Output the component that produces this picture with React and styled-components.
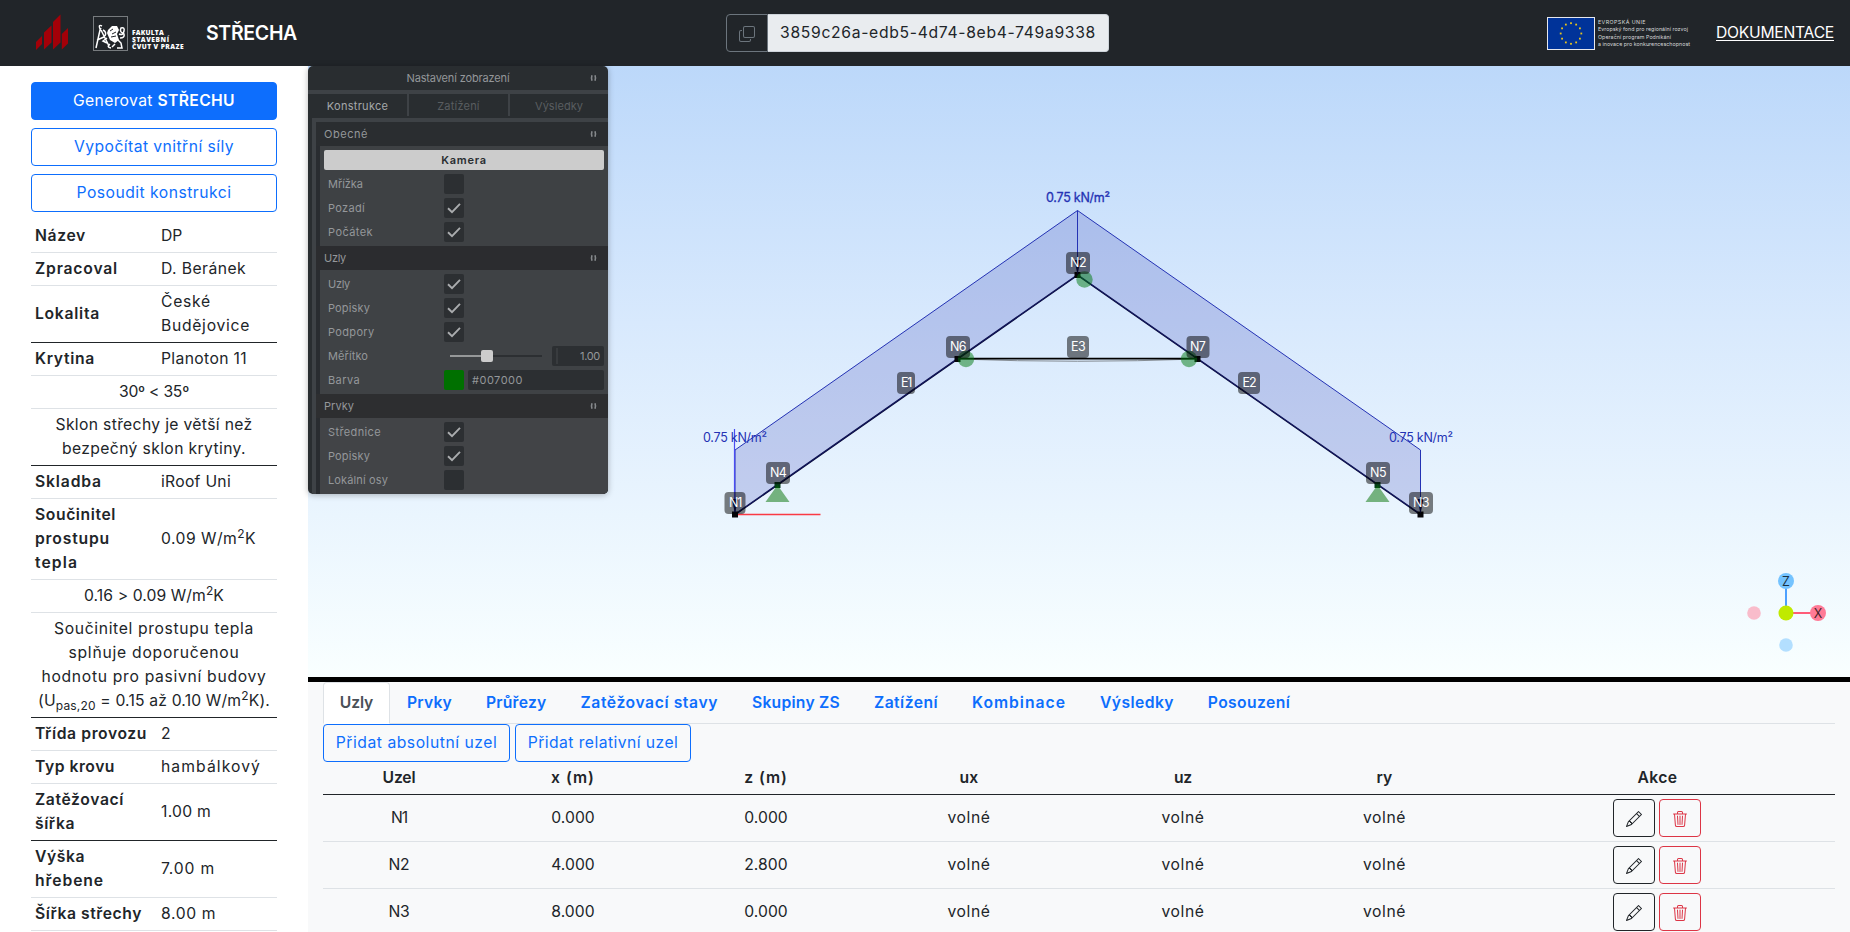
import React, { useLayoutEffect, useRef, useState } from "react";
import styled, { createGlobalStyle, css } from "styled-components";
import { BsCopy, BsPencil, BsTrash3 } from "react-icons/bs";

const GlobalStyle = createGlobalStyle`
  *, *::before, *::after { box-sizing: border-box; }
  body {
    margin: 0;
    overflow: hidden;
    font-family: Inter, "Noto Sans", sans-serif;
    font-size: 15.7px;
    line-height: 24px;
    color: #212529;
    background: #fff;
  }
  table { border-collapse: separate; border-spacing: 0; table-layout: fixed; }
`;

const FitText = styled.span`
  display: inline-block;
  white-space: nowrap;
`;

function Fit({ w, children }) {
  const ref = useRef(null);
  const [tracking, setTracking] = useState(0);
  useLayoutEffect(() => {
    const el = ref.current;
    const chars = el.textContent.length;
    const natural = el.getBoundingClientRect().width;
    setTracking((w - natural) / chars);
  }, [w]);
  return (
    <FitText ref={ref} style={{ letterSpacing: `${tracking}px` }}>
      {children}
    </FitText>
  );
}

/* ---------- page frame ---------- */

const Page = styled.div`
  display: flex;
  flex-direction: column;
  width: 1850px;
  height: 932px;
  overflow: hidden;
`;

const Body = styled.div`
  display: flex;
  flex: 1;
  min-height: 0;
`;

const Main = styled.main`
  display: flex;
  flex-direction: column;
  flex: 1;
  min-width: 0;
`;

/* ---------- header ---------- */

const Header = styled.header`
  display: flex;
  align-items: center;
  justify-content: space-between;
  height: 66px;
  padding: 0 16px 0 35px;
  background: #212529;
  color: #fff;
`;

const Brand = styled.div`
  display: flex;
  align-items: center;
  width: 691px;
`;

const FacultyLogo = styled.div`
  display: flex;
  gap: 4px;
  margin-left: 24px;
  width: 113px;
`;

const FacultyName = styled.div`
  padding-top: 13px;
  font: 900 6.6px/7.2px "Open Sans", sans-serif;
`;

const Title = styled.div`
  font-size: 19.5px;
  font-weight: 600;
`;

const IdGroup = styled.div`
  display: flex;
  height: 38px;
  width: 383px;
  margin-right: auto;
`;

const CopyButton = styled.button`
  display: flex;
  align-items: center;
  justify-content: center;
  width: 42px;
  padding: 1px 0 0;
  color: #6c757d;
  background: transparent;
  border: 1px solid #6c757d;
  border-radius: 4px 0 0 4px;
`;

const IdField = styled.div`
  flex: 1;
  padding: 6px 12px;
  color: #212529;
  background: #e9ecef;
  border: 1px solid #ced4da;
  border-left: 0;
  border-radius: 0 4px 4px 0;
  line-height: 24px;
`;

const Funding = styled.div`
  display: flex;
  gap: 3px;
  width: 169px;
`;

const FundingText = styled.div`
  padding-top: 2px;
  font: 5.3px/7.6px Inter, sans-serif;
  color: #d8d9da;
`;

const DocLink = styled.a`
  color: #fff;
  line-height: 20px;
  ${FitText} {
    text-decoration: underline;
    text-decoration-thickness: 1px;
    text-underline-offset: 2px;
  }
`;

/* ---------- sidebar ---------- */

const Sidebar = styled.aside`
  width: 308px;
  padding: 16px 31px 0;
  overflow: hidden;
`;

const ButtonStack = styled.div`
  display: flex;
  flex-direction: column;
  gap: 8px;
  margin-bottom: 8px;
`;

const Button = styled.button`
  height: 38px;
  padding: 0;
  font: inherit;
  text-align: center;
  border: 1px solid #0d6efd;
  border-radius: 4px;
  color: ${(p) => (p.$primary ? "#fff" : "#0d6efd")};
  background: ${(p) => (p.$primary ? "#0d6efd" : "transparent")};
  width: ${(p) => (p.$width ? `${p.$width}px` : "auto")};
  b { font-weight: 600; }
`;

const InfoTable = styled.table`
  width: 246px;
`;

const InfoRow = styled.tr`
  > * { border-bottom: 1px solid ${(p) => (p.$strong ? "#212529" : "#dee2e6")}; }
`;

const cell = css`
  padding: 4px;
  vertical-align: middle;
  sup, sub { font-size: 12px; line-height: 0; position: relative; vertical-align: baseline; }
  sup { top: -6px; }
  sub { bottom: -4px; }
`;

const InfoHead = styled.th`
  ${cell}
  text-align: left;
  font-weight: 600;
`;

const InfoCell = styled.td`
  ${cell}
  text-align: ${(p) => (p.$note ? "center" : "left")};
  padding: ${(p) => (p.$note ? "4px 0" : "4px")};
`;

const INFO = [
  { head: [["Název", 51]], value: [["DP", 21]] },
  { head: [["Zpracoval", 83]], value: [["D. Beránek", 85]] },
  { head: [["Lokalita", 65]], value: [["České", 50], ["Budějovice", 89]], strong: true },
  { head: [["Krytina", 60]], value: [["Planoton 11", 86]] },
  { note: [["30º < 35º", 70]] },
  { note: [["Sklon střechy je větší než", 197], ["bezpečný sklon krytiny.", 184]], strong: true },
  { head: [["Skladba", 67]], value: [["iRoof Uni", 70]] },
  {
    head: [["Součinitel", 81], ["prostupu", 75], ["tepla", 43]],
    value: [[<>0.09 W/m<sup>2</sup>K</>, 95]],
  },
  { note: [[<>0.16 &gt; 0.09 W/m<sup>2</sup>K</>, 140]] },
  {
    note: [
      ["Součinitel prostupu tepla", 200],
      ["splňuje doporučenou", 171],
      ["hodnotu pro pasivní budovy", 225],
      [<>(U<sub>pas,20</sub> = 0.15 až 0.10 W/m<sup>2</sup>K).</>, 232],
    ],
    strong: true,
  },
  { head: [["Třída provozu", 112]], value: [["2", 10]] },
  { head: [["Typ krovu", 80]], value: [["hambálkový", 100]] },
  { head: [["Zatěžovací", 89], ["šířka", 40]], value: [["1.00 m", 50]], strong: true },
  { head: [["Výška", 50], ["hřebene", 69]], value: [["7.00 m", 54]] },
  { head: [["Šířka střechy", 107]], value: [["8.00 m", 55]] },
];

const Line = styled.div`
  height: 24px;
  white-space: nowrap;
`;

const Lines = ({ items }) =>
  items.map(([text, w], i) => (
    <Line key={i}>
      <Fit w={w}>{text}</Fit>
    </Line>
  ));

/* ---------- 3D view ---------- */

const View = styled.section`
  position: relative;
  height: 611px;
  background: linear-gradient(to bottom, #bcd8fa 0%, #d8e9fd 42%, #f9ffff 100%);
`;

const Scene = styled.svg`
  position: absolute;
  inset: 0;
  width: 1542px;
  height: 611px;
`;

const Tag = styled.div`
  position: absolute;
  left: ${(p) => p.$x - 308}px;
  top: ${(p) => p.$y - 66}px;
  transform: translate(-50%, -50%);
  width: ${(p) => p.$w}px;
  height: 22px;
  border-radius: 4px;
  background: rgba(0, 0, 0, 0.5);
  color: #fff;
  font-size: 12.5px;
  line-height: 22px;
  text-align: center;
`;

const TAGS = [
  ["N1", 735, 503, 21, 12], ["N2", 1078, 263, 24, 16], ["N3", 1421, 503, 24, 16],
  ["N4", 778, 473, 24, 16], ["N5", 1378, 473, 24, 16], ["N6", 958, 347, 24, 16],
  ["N7", 1197.5, 347, 23, 15], ["E1", 906, 383, 18, 10], ["E2", 1249, 383, 22, 13],
  ["E3", 1078, 347, 22, 14],
];

/* ---------- settings panel ---------- */

const Panel = styled.div`
  position: absolute;
  left: 0;
  top: 0;
  display: flex;
  flex-direction: column;
  width: 300px;
  height: 428px;
  overflow: hidden;
  border-radius: 5px;
  background: #292d30;
  color: #94979a;
  font-size: 11px;
  line-height: 20px;
  box-shadow: 0 1px 6px rgba(0, 0, 0, 0.28);
`;

const PanelTitle = styled.div`
  display: flex;
  align-items: center;
  height: 24px;
  padding: 0 11px 0 0;
  span { flex: 1; padding-left: 9px; text-align: center; }
`;

const PanelTabs = styled.div`
  display: flex;
  height: 28px;
  border-top: 4px solid #3e4246;
  padding-bottom: 2px;
`;

const PanelTab = styled.div`
  width: ${(p) => p.$width}px;
  text-align: center;
  line-height: 25px;
  color: ${(p) => (p.$active ? "#a5a8aa" : "#595d60")};
  & + & { border-left: 2px solid #3e4246; }
`;

const PanelBody = styled.div`
  flex: 1;
  margin-left: 4px;
  border-left: 4px solid #3e4246;
  border-top: 4px solid #3e4246;
  background: #292c30;
`;

const FolderTitle = styled.div`
  display: flex;
  align-items: center;
  justify-content: space-between;
  height: 24px;
  padding: 0 11px 0 8px;
  background: ${(p) => p.$bg || "#2b2c2f"};
`;

const Folder = styled.div`
  display: flex;
  flex-direction: column;
  gap: 4px;
  margin-left: 4px;
  padding: 4px;
  background: ${(p) => p.$bg || "#3f4245"};
`;

const PanelButton = styled.div`
  height: 20px;
  border-radius: 2px;
  background: #ccc;
  color: #292d30;
  font-weight: 600;
  text-align: center;
`;

const Field = styled.div`
  display: flex;
  align-items: center;
  height: 20px;
  padding-left: 4px;
`;

const FieldLabel = styled.div`
  width: 116px;
`;

const Check = styled.div`
  display: flex;
  width: 20px;
  height: 20px;
  border-radius: 2px;
  background: #2c2f32;
`;

const Slider = styled.div`
  display: flex;
  align-items: center;
  width: 92px;
  margin: 0 10px 0 6px;
`;

const Track = styled.div`
  height: 2px;
  width: ${(p) => p.$width}px;
  background: ${(p) => (p.$filled ? "#969899" : "#2c2f32")};
`;

const Thumb = styled.div`
  width: 12px;
  height: 12px;
  border-radius: 2px;
  background: #ccc;
`;

const ValueBox = styled.div`
  display: flex;
  align-items: center;
  justify-content: flex-end;
  height: 20px;
  width: ${(p) => p.$width}px;
  padding: 0 4px;
  border-radius: 2px;
  background: #2c2f32;
`;

const DragMark = styled.i`
  width: 2px;
  height: 16px;
  margin-right: auto;
  background: #383b3e;
`;

const Swatch = styled.div`
  width: 20px;
  height: 20px;
  margin-right: 4px;
  border-radius: 2px;
  background: #007000;
`;

const HexBox = styled(ValueBox)`
  justify-content: flex-start;
`;

const Grip = () => (
  <svg width="7" height="6" viewBox="0 0 7 6" fill="none" stroke="#85888b" strokeWidth="1.6">
    <path d="M2 .3 Q1 3 2 5.7 M5 .3 Q6 3 5 5.7" />
  </svg>
);

const CheckField = ({ label, w, on }) => (
  <Field>
    <FieldLabel><Fit w={w}>{label}</Fit></FieldLabel>
    <Check>
      {on && (
        <svg width="20" height="20" viewBox="0 0 20 20" fill="none" stroke="#aaacae" strokeWidth="1.9">
          <path d="M4 10.3 L8 14.2 L16 5.8" />
        </svg>
      )}
    </Check>
  </Field>
);

const SettingsPanel = () => (
  <Panel>
    <PanelTitle><span><Fit w={112}>Nastavení zobrazení</Fit></span><Grip /></PanelTitle>
    <PanelTabs>
      <PanelTab $width={99} $active><Fit w={61.5}>Konstrukce</Fit></PanelTab>
      <PanelTab $width={101}><Fit w={42.5}>Zatížení</Fit></PanelTab>
      <PanelTab $width={100}><Fit w={48}>Výsledky</Fit></PanelTab>
    </PanelTabs>
    <PanelBody>
      <FolderTitle $bg="#2a2d30"><Fit w={44}>Obecné</Fit><Grip /></FolderTitle>
      <Folder $bg="#3e4144">
        <PanelButton><Fit w={45.5}>Kamera</Fit></PanelButton>
        <CheckField label="Mřížka" w={35} />
        <CheckField label="Pozadí" w={37} on />
        <CheckField label="Počátek" w={45} on />
      </Folder>
      <FolderTitle><Fit w={22}>Uzly</Fit><Grip /></FolderTitle>
      <Folder>
        <CheckField label="Uzly" w={22} on />
        <CheckField label="Popisky" w={42} on />
        <CheckField label="Podpory" w={46.5} on />
        <Field>
          <FieldLabel><Fit w={40}>Měřítko</Fit></FieldLabel>
          <Slider>
            <Track $width={31} $filled />
            <Thumb />
            <Track $width={49} />
          </Slider>
          <ValueBox $width={52}><DragMark /><Fit w={20}>1.00</Fit></ValueBox>
        </Field>
        <Field>
          <FieldLabel><Fit w={32}>Barva</Fit></FieldLabel>
          <Swatch />
          <HexBox $width={136}><Fit w={51}>#007000</Fit></HexBox>
        </Field>
      </Folder>
      <FolderTitle $bg="#2d2e30"><Fit w={30}>Prvky</Fit><Grip /></FolderTitle>
      <Folder $bg="#424447">
        <CheckField label="Střednice" w={53} on />
        <CheckField label="Popisky" w={42} on />
        <CheckField label="Lokální osy" w={60} />
      </Folder>
    </PanelBody>
  </Panel>
);

const LOAD = "#2432b4";
const NODES = [[735, 514.5], [1077.5, 275], [1420.5, 514.5], [957.5, 359], [1197.5, 359]];

const RoofScene = () => (
  <Scene viewBox="308 66 1542 611">
    <g fill="none" strokeWidth="1.7" stroke="#05052c">
      <path d="M735 514.5 L1077.5 275 L1420.5 514.5" />
      <path d="M957.5 359 Q1077.5 363.5 1197.5 359" stroke="#858c93" strokeWidth="1" />
      <path d="M957.5 358.7 H1197.5" stroke="#000" />
    </g>
    <path d="M735 514.5 V450 L1077.5 210.5 V275 Z" fill="#2634b0" fillOpacity=".2" />
    <path d="M1420.5 514.5 V450 L1077.5 210.5 V275 Z" fill="#2634b0" fillOpacity=".2" />
    <path d="M735 514 V450 L1077.5 210.5 L1420.5 450 V514 M1077.5 210.5 V275" fill="none" stroke={LOAD} strokeWidth="1" />
    <path d="M735 514.5 L1077.5 275 L1420.5 514.5" fill="none" stroke={LOAD} strokeWidth=".6" strokeOpacity=".6" />
    <path d="M734.5 429 V514" stroke="#4a4cf2" strokeWidth="1.2" />
    <path d="M735 514.5 H820.5" stroke="#fa3a45" strokeWidth="1.3" />
    {NODES.map(([x, y]) => (
      <rect key={x} x={x - 3} y={y - 3} width="6" height="6" fill="#050508" />
    ))}
    {[735, 1077.5, 1420.5].map((x) => {
      const y = x === 1077.5 ? 275 : 514;
      return <path key={x} d={`M${x - 3} ${y - 15} h6 L${x} ${y} Z`} fill="#0a1058" />;
    })}
    {[777.5, 1377.5].map((x) => (
      <g key={x}>
        <rect x={x - 3} y="482" width="6" height="6" fill="#053d18" />
        <path d={`M${x} 485 L${x + 12} 502 H${x - 12} Z`} fill="#007000" fillOpacity=".5" />
      </g>
    ))}
    <g fill="#007a10" fillOpacity=".5">
      <circle cx="1084.5" cy="279.5" r="8.2" />
      <circle cx="966" cy="359" r="8.2" />
      <circle cx="1189" cy="359" r="8.2" />
    </g>
    <g fill={LOAD} fontSize="12.5" fontFamily="Inter, sans-serif">
      <text x="703" y="442" textLength="64">0.75 kN/m²</text>
      <text x="1046" y="202" textLength="64" stroke={LOAD} strokeWidth=".3">0.75 kN/m²</text>
      <text x="1389" y="442" textLength="64">0.75 kN/m²</text>
    </g>
    <path d="M1786 613 V581" stroke="#4da0ff" strokeWidth="2" />
    <path d="M1786 613 H1818" stroke="#ff5c78" strokeWidth="2" />
    <circle cx="1786" cy="613" r="7.5" fill="#c0ea00" />
    <circle cx="1786" cy="581" r="8" fill="#74c3ff" />
    <circle cx="1818" cy="613" r="8" fill="#ff7a96" />
    <circle cx="1754" cy="613" r="6.8" fill="#f9bccb" />
    <circle cx="1786" cy="645" r="6.8" fill="#b3dfff" />
    <g fill="#1b3040" fontSize="12.5" textAnchor="middle" fontFamily="Inter, sans-serif">
      <text x="1786" y="585.7">Z</text>
      <text x="1818" y="617.7" fill="#451f28">X</text>
    </g>
  </Scene>
);

/* ---------- data area ---------- */

const DataArea = styled.section`
  flex: 1;
  padding: 0 15px;
  overflow: hidden;
  background: #f8f9fa;
  border-top: 5px solid #000;
`;

const Tabs = styled.nav`
  display: flex;
  height: 42px;
  border-bottom: 1px solid #dee2e6;
`;

const Tab = styled.div`
  width: ${(p) => p.$width}px;
  height: 42px;
  padding-top: 8px;
  text-align: center;
  font-weight: 600;
  color: #0d6efd;
  border: 1px solid transparent;
  ${(p) => p.$active && css`
    color: #495057;
    background: #fff;
    border-color: #dee2e6 #dee2e6 #fff;
    border-radius: 4px 4px 0 0;
  `}
`;

const TABS = [
  ["Uzly", 67, 33.5], ["Prvky", 79, 45], ["Průřezy", 94.5, 60.5], ["Zatěžovací stavy", 171.5, 137.5],
  ["Skupiny ZS", 122, 88], ["Zatížení", 98, 64], ["Kombinace", 128, 94], ["Výsledky", 108, 74],
  ["Posouzení", 116, 82.5],
];

const Toolbar = styled.div`
  display: flex;
  gap: 5px;
`;

const NodeTable = styled.table`
  width: 1512px;
  text-align: center;
  th { height: 33px; padding: 0; font-weight: 600; border-bottom: 1px solid #212529; }
  td { height: 47px; padding: 0; border-bottom: 1px solid #dee2e6; }
`;

const Actions = styled.div`
  display: flex;
  justify-content: center;
  gap: 4px;
  padding-right: 1px;
`;

const IconButton = styled.button`
  display: flex;
  align-items: center;
  justify-content: center;
  width: 42px;
  height: 38px;
  padding: 2px 0 0;
  background: transparent;
  color: ${(p) => p.$color};
  border: 1px solid ${(p) => p.$color};
  border-radius: 4px;
`;

const COLUMNS = [
  ["Uzel", 152, 33], ["x (m)", 196, 44], ["z (m)", 190, 43.5], ["ux", 216, 19],
  ["uz", 212, 18], ["ry", 191, 16], ["Akce", 355, 40],
];

const ROWS = [
  [["N1", 16], ["0.000", 43.5], ["0.000", 43.5]],
  [["N2", 21], ["4.000", 43.5], ["2.800", 43.5]],
  [["N3", 21], ["8.000", 43.5], ["0.000", 43.5]],
];

const STARS = Array.from({ length: 12 }, (_, i) => {
  const a = (i * Math.PI) / 6;
  return [24 + 10.3 * Math.sin(a), 16.5 - 10.3 * Math.cos(a)];
});

export default function App() {
  return (
    <Page>
      <GlobalStyle />
      <Header>
        <Brand>
          <svg width="34" height="38" viewBox="35 14 34 38" fill="#a30008">
            <path d="M36 42 L42 36 V44 L36 50 Z" />
            <path d="M44 32.5 L51.5 25.5 V42.5 L44 49.5 Z" />
            <path d="M53 22 L60.5 14.5 V42.5 L53 49.5 Z" />
            <path d="M61.8 34 L68 28 V43.5 L61.8 49.5 Z" />
          </svg>
          <FacultyLogo>
            <svg width="35" height="35" viewBox="0 0 35 35" fill="none">
              <rect x=".5" y=".5" width="34" height="34" stroke="#777b7e" />
              <g stroke="#fff" strokeWidth="1.5">
                <path d="M3 32 L7 14 L8 12 M8 14 L16 30 M7 13 Q5 8 9 10 M10 14 Q14 16 12 20 M4 24 L11 21" />
                <path d="M14 22 L10 25 L14 27 M17 28 Q13 31 18 32 M25 24 L28 27 L29 32 L24 32 M22 28 L19 31" />
                <path d="M27 22 Q32 22 31 18 Q26 16 28 12 Q32 11 31 15 M26 18 Q30 20 31 15" />
              </g>
              <path d="M15 14 L19 10 L24 10 L26 14 L24 18 L26 24 L22 27 L17 24 L14 17 Z" fill="#fff" />
              <path d="M17 15 L20 13 M19 18 L23 16 M18 21 L23 20" stroke="#212529" />
            </svg>
            <FacultyName>
              <div><Fit w={32}>FAKULTA</Fit></div>
              <div><Fit w={37.5}>STAVEBNÍ</Fit></div>
              <div><Fit w={52}>ČVUT V PRAZE</Fit></div>
            </FacultyName>
          </FacultyLogo>
          <Title><Fit w={91}>STŘECHA</Fit></Title>
        </Brand>
        <IdGroup>
          <CopyButton><BsCopy size={16} /></CopyButton>
          <IdField><Fit w={316}>3859c26a-edb5-4d74-8eb4-749a9338</Fit></IdField>
        </IdGroup>
        <Funding>
          <svg width="48" height="33" viewBox="0 0 48 33">
            <rect x=".5" y=".5" width="47" height="32" fill="#003399" stroke="#e6e8ee" />
            {STARS.map(([x, y], i) => (
              <rect key={i} x={x - 0.9} y={y - 0.9} width="1.8" height="1.8" fill="#e8c51c" />
            ))}
          </svg>
          <FundingText>
            <div><Fit w={48}>EVROPSKÁ UNIE</Fit></div>
            <div><Fit w={90}>Evropský fond pro regionální rozvoj</Fit></div>
            <div><Fit w={73}>Operační program Podnikání</Fit></div>
            <div><Fit w={92}>a inovace pro konkurenceschopnost</Fit></div>
          </FundingText>
        </Funding>
        <DocLink><Fit w={118}>DOKUMENTACE</Fit></DocLink>
      </Header>
      <Body>
        <Sidebar>
          <ButtonStack>
            <Button $primary><Fit w={162}>Generovat <b>STŘECHU</b></Fit></Button>
            <Button><Fit w={160}>Vypočítat vnitřní síly</Fit></Button>
            <Button><Fit w={155}>Posoudit konstrukci</Fit></Button>
          </ButtonStack>
          <InfoTable>
            <colgroup><col width="126" /><col /></colgroup>
            <tbody>
              {INFO.map((row, i) => (
                <InfoRow key={i} $strong={row.strong}>
                  {row.note ? (
                    <InfoCell colSpan={2} $note><Lines items={row.note} /></InfoCell>
                  ) : (
                    <>
                      <InfoHead><Lines items={row.head} /></InfoHead>
                      <InfoCell><Lines items={row.value} /></InfoCell>
                    </>
                  )}
                </InfoRow>
              ))}
            </tbody>
          </InfoTable>
        </Sidebar>
        <Main>
          <View>
            <RoofScene />
            {TAGS.map(([name, x, y, w, text]) => (
              <Tag key={name} $x={x} $y={y} $w={w}><Fit w={text}>{name}</Fit></Tag>
            ))}
            <SettingsPanel />
          </View>
          <DataArea>
            <Tabs>
              {TABS.map(([name, width, w], i) => (
                <Tab key={name} $width={width} $active={i === 0}><Fit w={w}>{name}</Fit></Tab>
              ))}
            </Tabs>
            <Toolbar>
              <Button $width={187}><Fit w={161.5}>Přidat absolutní uzel</Fit></Button>
              <Button $width={176}><Fit w={150.5}>Přidat relativní uzel</Fit></Button>
            </Toolbar>
            <NodeTable>
              <colgroup>{COLUMNS.map(([name, width]) => <col key={name} width={width} />)}</colgroup>
              <thead>
                <tr>{COLUMNS.map(([name, , w]) => <th key={name}><Fit w={w}>{name}</Fit></th>)}</tr>
              </thead>
              <tbody>
                {ROWS.map((row) => (
                  <tr key={row[0][0]}>
                    {row.map(([text, w], i) => <td key={i}><Fit w={w}>{text}</Fit></td>)}
                    {["ux", "uz", "ry"].map((axis) => <td key={axis}><Fit w={43}>volné</Fit></td>)}
                    <td>
                      <Actions>
                        <IconButton $color="#212529"><BsPencil size={16} /></IconButton>
                        <IconButton $color="#dc3545"><BsTrash3 size={16} /></IconButton>
                      </Actions>
                    </td>
                  </tr>
                ))}
              </tbody>
            </NodeTable>
          </DataArea>
        </Main>
      </Body>
    </Page>
  );
}
